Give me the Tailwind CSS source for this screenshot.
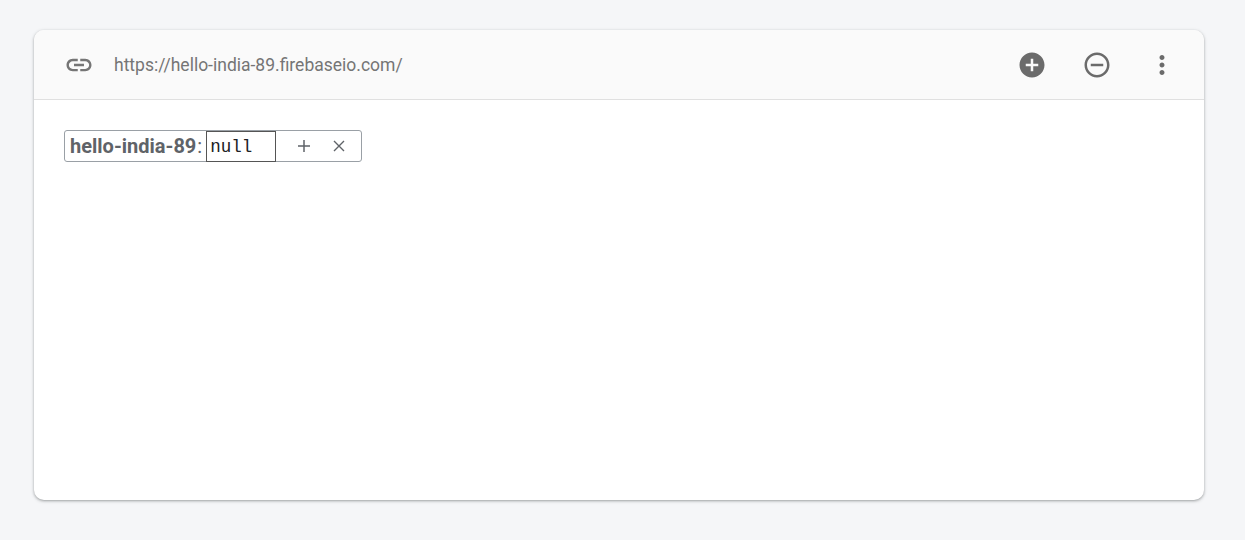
<!DOCTYPE html>
<html lang="en">
<head>
  <meta charset="UTF-8" />
  <title>Realtime Database</title>
  <script src="https://cdn.jsdelivr.net/npm/@tailwindcss/browser@4"></script>
</head>
<body class="bg-[#f5f6f8] h-[540px] overflow-hidden pt-[30px] pl-[34px] font-['Roboto',sans-serif]">
  <div class="w-[1170px] h-[470px] bg-white rounded-[10px] shadow-[0_1px_2px_rgba(60,64,67,0.3),0_1px_3px_1px_rgba(60,64,67,0.15)] overflow-hidden">

    <!-- url bar -->
    <div class="h-[70px] bg-[#fafafa] border-b border-[#e0e0e0] flex items-center pl-[30px] pr-[27px]">
      <svg class="w-[30px] h-[30px] fill-[#757575]" viewBox="0 0 24 24"><path d="M3.9 12c0-1.71 1.39-3.1 3.1-3.1h4V7H7c-2.76 0-5 2.24-5 5s2.24 5 5 5h4v-1.9H7c-1.71 0-3.1-1.39-3.1-3.1zM8 13h8v-2H8v2zm9-6h-4v1.9h4c1.71 0 3.1 1.39 3.1 3.1s-1.39 3.1-3.1 3.1h-4V17h4c2.76 0 5-2.24 5-5s-2.24-5-5-5z"/></svg>
      <span class="ml-[20px] text-[17.5px] text-[#757575] relative top-[1px]">https://hello-india-89.firebaseio.com/</span>
      <div class="ml-auto flex items-center gap-[35px]">
        <svg class="w-[30px] h-[30px] fill-[#6b6b6b]" viewBox="0 0 24 24"><path d="M12 2C6.48 2 2 6.48 2 12s4.48 10 10 10 10-4.48 10-10S17.52 2 12 2zm5 11h-4v4h-2v-4H7v-2h4V7h2v4h4v2z"/></svg>
        <svg class="w-[30px] h-[30px] fill-[#6b6b6b]" viewBox="0 0 24 24"><path d="M7 11v2h10v-2H7zm5-9C6.48 2 2 6.48 2 12s4.48 10 10 10 10-4.48 10-10S17.52 2 12 2zm0 18c-4.41 0-8-3.59-8-8s3.59-8 8-8 8 3.59 8 8-3.59 8-8 8z"/></svg>
        <svg class="w-[30px] h-[30px] fill-[#6b6b6b]" viewBox="0 0 24 24"><path d="M12 8c1.1 0 2-.9 2-2s-.9-2-2-2-2 .9-2 2 .9 2 2 2zm0 2c-1.1 0-2 .9-2 2s.9 2 2 2 2-.9 2-2-.9-2-2-2zm0 6c-1.1 0-2 .9-2 2s.9 2 2 2 2-.9 2-2-.9-2-2-2z"/></svg>
      </div>
    </div>

    <!-- tree -->
    <div class="pt-[30px] pl-[30px]">
      <div class="w-[298px] h-[32px] border border-[#9aa0a6] rounded-[3px] flex items-center pl-[5px] text-[#5f6368]">
        <span class="text-[20px] font-bold">hello-india-89</span><span class="text-[20px] ml-[1px]">:</span>
        <div class="w-[70px] h-[31px] -mb-[1px] ml-[4px] border border-[#555555] pl-[3px] pt-[2px] flex items-center text-[17.5px] text-[#202124] font-['Liberation_Mono',monospace]">null</div>
        <svg class="ml-[20px] w-[16px] h-[16px] stroke-[#5f6368]" viewBox="0 0 16 16" fill="none" stroke-width="1.5"><path d="M8 2v12M2 8h12"/></svg>
        <svg class="ml-[20px] w-[14px] h-[14px] stroke-[#5f6368]" viewBox="0 0 14 14" fill="none" stroke-width="1.4"><path d="M2 2l10 10M12 2L2 12"/></svg>
      </div>
    </div>
  </div>
</body>
</html>
